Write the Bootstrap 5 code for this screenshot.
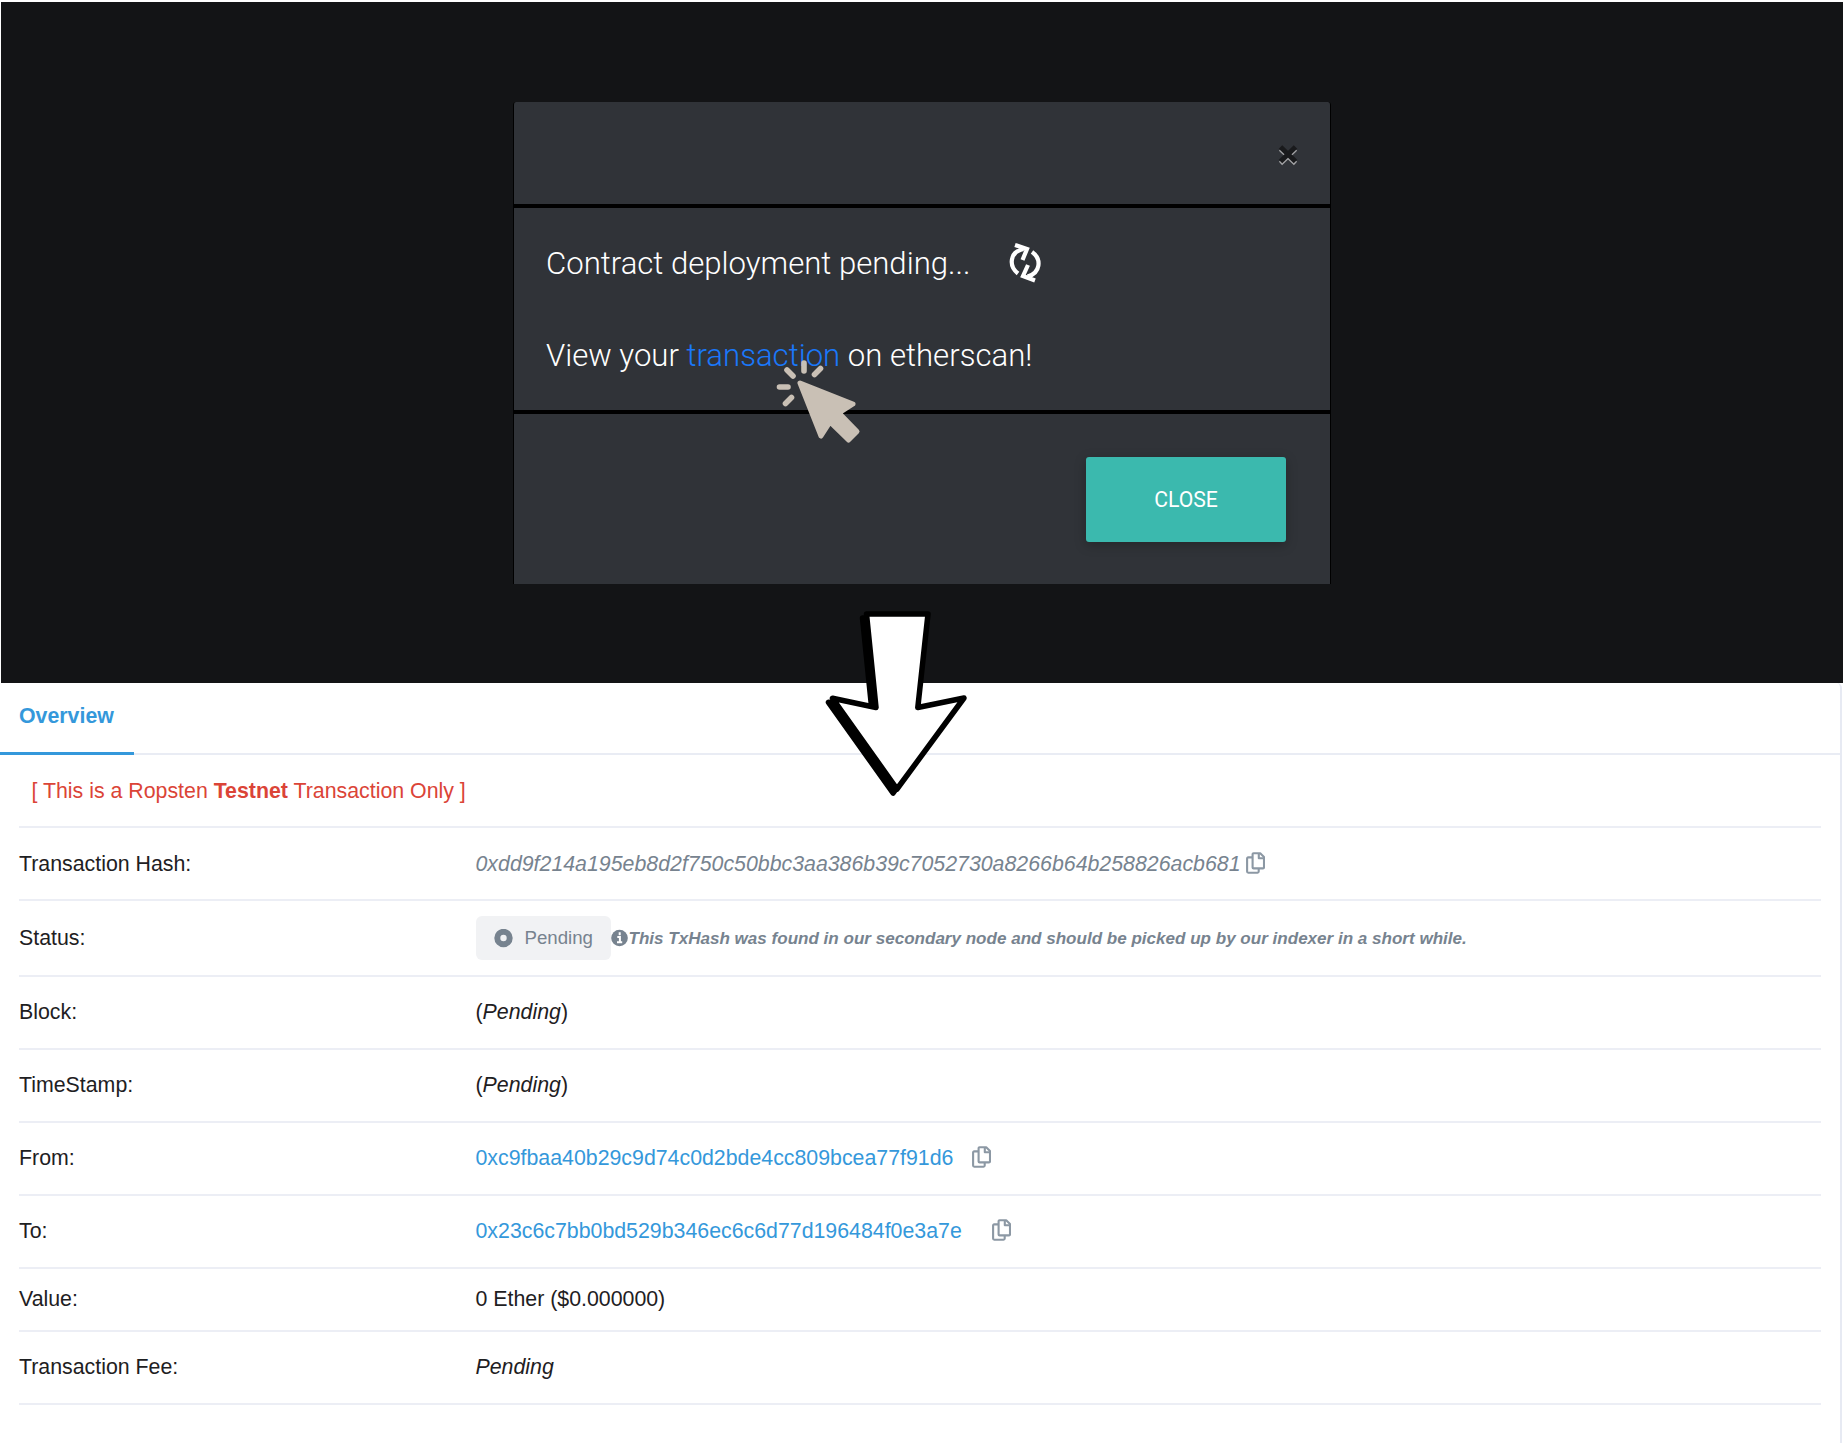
<!DOCTYPE html>
<html lang="en">
<head>
<meta charset="utf-8">
<title>Transaction overview</title>
<link href="https://cdn.jsdelivr.net/npm/bootstrap@5.3.0/dist/css/bootstrap.min.css" rel="stylesheet">
<style>
body{font-family:"Liberation Sans",Arial,sans-serif;font-size:21.33px;line-height:1.5;color:#1e2022;background:#fff;height:1443px;overflow:hidden}
.stage{height:681px;margin:2px 0 0 1px;background:#131416;padding-top:100px}
.dialog-box{width:818px;height:482px;margin-left:512px;background:#303338;border-left:1px solid #000;border-right:1px solid #000;border-radius:3px 3px 0 0;font-family:Roboto,sans-serif;font-weight:300;font-size:31.12px;line-height:38px;color:#fff}
.dialog-head{height:106px;border-bottom:4px solid #000;padding:4px 31px 0 0}
.dialog-main{height:206px;border-bottom:4px solid #000;padding:37px 32px 0}
.dialog-main p{height:38px;margin-bottom:54px}
.dialog-main a{color:#1a78fa}
.dialog-foot{padding:43px 44px 0 0}
.btn-teal,.btn-teal:hover{width:200px;height:85px;background:#3bb9ae;color:#fff;border:0;border-radius:3px;font-size:21.2px;padding-top:7px;box-shadow:0 3px 12px rgba(0,0,0,.25)}
.over{position:absolute;pointer-events:none}
.scan{height:760px;border-right:2px solid #e7eaf3;border-top-right-radius:5px;width:1842px}
.tabs-line{height:72px;border-bottom:2px solid #e9ecf4}
.tabs-line .nav-link{width:134px;height:72px;padding:18px 0 0 19px;color:#3498db;font-weight:700;border-bottom:3px solid #3498db}
.field{height:73px;margin:0 19px;border-bottom:2px solid #eceef5}
.field dt{width:456.5px;font-weight:400}
.field dd{margin:0}
.nudge{padding-top:2px}
.warn{color:#db4437;padding-left:12.5px}
.muted{color:#77838f}
.scan a{color:#3498db}
.pill{width:135px;height:44px;background:#f1f2f4;border-radius:6px;font-size:18.67px;padding-left:18px}
.note{font-size:17.06px;font-weight:700;font-style:italic}
.ico{flex:none;display:block}
</style>
<script src="https://cdn.jsdelivr.net/npm/bootstrap@5.3.0/dist/js/bootstrap.bundle.min.js"></script>
</head>
<body>
<svg width="0" height="0" class="over"><defs>
<symbol id="copy" viewBox="0 0 19 22"><g fill="none" stroke="#8c98a4" stroke-width="2.1" stroke-linejoin="round"><path d="M7.6 1.2h6.6l3.8 3.8v10.4q0 1-1 1H7.6q-1 0-1-1V2.2q0-1 1-1z"/><path d="M12.8 1.5v4.7h5"/><path d="M6 5.4H2.2q-1.1 0-1.1 1.1v13.1q0 1.1 1.1 1.1h9.4q1.1 0 1.1-1.1V17"/></g></symbol>
</defs></svg>
<section class="stage">
  <div class="dialog-box">
    <div class="dialog-head d-flex justify-content-end align-items-center">
      <svg class="ico" width="22" height="22" viewBox="0 0 22 22"><path d="M3.500 5l15 14.500M18.500 5l-15 14.500" stroke="#a2a3a5" stroke-width="4.600"/><path d="M3.500 3l15 14.500M18.500 3l-15 14.500" stroke="#191a1c" stroke-width="5"/></svg>
    </div>
    <div class="dialog-main">
      <p class="d-flex align-items-center"><span>Contract deployment pending...</span>
      <svg class="ico" style="margin-left:38px;margin-top:-4px" width="34" height="42" viewBox="1007.500 241 34 42"><g fill="none" stroke="#fff" stroke-width="4.200"><path d="M1017.500 273.500C1008 266 1009 252 1023 249M1031.500 252C1041.500 259 1040 273 1027 276.500"/><path d="M1014.500 245l12 4-4.500 11M1034.500 280.500l-12-4.500 5-11"/></g></svg></p>
      <p>View your <a href="#" class="text-decoration-none">transaction</a> on etherscan!</p>
    </div>
    <div class="dialog-foot d-flex justify-content-end"><button class="btn btn-teal">CLOSE</button></div>
  </div>
</section>
<section class="scan">
  <nav class="nav tabs-line"><a class="nav-link" href="#">Overview</a></nav>
  <div class="field d-flex align-items-center"><div class="warn nudge">[ This is a Ropsten <b>Testnet</b> Transaction Only ]</div></div>
  <dl class="mb-0">
    <div class="field d-flex align-items-center"><dt class="nudge">Transaction Hash:</dt><dd class="d-flex align-items-center muted"><i class="nudge">0xdd9f214a195eb8d2f750c50bbc3aa386b39c7052730a8266b64b258826acb681</i><svg class="ico" style="margin-left:5px" width="19" height="22"><use href="#copy"/></svg></dd></div>
    <div class="field d-flex align-items-center" style="height:76px"><dt class="nudge">Status:</dt><dd class="d-flex align-items-center muted">
      <span class="pill d-flex align-items-center"><svg class="ico" style="margin-right:12px" width="19" height="19" viewBox="0 0 19 19"><circle cx="9.500" cy="9" r="6.200" fill="none" stroke="#77838f" stroke-width="6"/></svg>Pending</span>
      <svg class="ico" width="18" height="18" viewBox="0 0 18 18"><circle cx="8.500" cy="9" r="8.300" fill="#77838f"/><path d="M8.700 3.200v3M6.300 8h2.600v5M6 13.200h5.200" stroke="#fff" stroke-width="2" fill="none"/></svg><span class="note nudge">This TxHash was found in our secondary node and should be picked up by our indexer in a short while.</span></dd></div>
    <div class="field d-flex align-items-center"><dt>Block:</dt><dd>(<i>Pending</i>)</dd></div>
    <div class="field d-flex align-items-center"><dt>TimeStamp:</dt><dd>(<i>Pending</i>)</dd></div>
    <div class="field d-flex align-items-center"><dt>From:</dt><dd class="d-flex align-items-center"><a class="text-decoration-none" href="#">0xc9fbaa40b29c9d74c0d2bde4cc809bcea77f91d6</a><svg class="ico" style="margin:-2px 0 0 19px" width="19" height="22"><use href="#copy"/></svg></dd></div>
    <div class="field d-flex align-items-center"><dt>To:</dt><dd class="d-flex align-items-center"><a class="text-decoration-none" href="#">0x23c6c7bb0bd529b346ec6c6d77d196484f0e3a7e</a><svg class="ico" style="margin:-2px 0 0 30.500px" width="19" height="22"><use href="#copy"/></svg></dd></div>
    <div class="field d-flex align-items-center" style="height:63px"><dt>Value:</dt><dd>0 Ether ($0.000000)</dd></div>
    <div class="field d-flex align-items-center"><dt>Transaction Fee:</dt><dd><i>Pending</i></dd></div>
  </dl>
</section>
<!-- pointer clicking the link -->
<svg class="over" style="left:770px;top:355px" width="95" height="92" viewBox="770 355 95 92"><g stroke="#c9c0b5" stroke-linejoin="round" stroke-linecap="round"><path fill="#c9c0b5" stroke-width="5" d="M800 383L853 404 839 413 857 431.500 848.500 440 830 422 821 436z"/><path fill="none" stroke-width="5.600" d="M804 363v8M787 370l6 6M820.500 368.500l-6 6M779.500 387h8.500M785.500 403.500l6-6"/></g></svg>
<!-- arrow from dialog to explorer -->
<svg class="over" style="left:820px;top:605px" width="152" height="196" viewBox="820 605 152 196"><g stroke="#000" stroke-width="5.500" stroke-linejoin="round"><path transform="translate(-4 4)" d="M866.500 614H928L917.800 707.500 964 698 897 789 832.500 698.300 876 707.500z"/><path fill="#fff" d="M866.500 614H928L917.800 707.500 964 698 897 789 832.500 698.300 876 707.500z"/></g></svg>
</body>
</html>
